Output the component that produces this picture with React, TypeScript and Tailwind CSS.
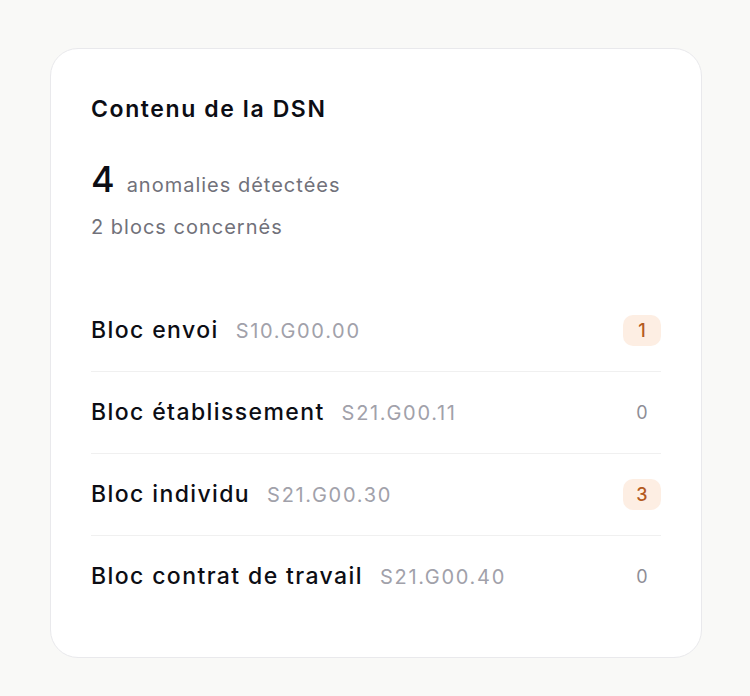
import React from 'react';

type Bloc = {
  name: string;
  code: string;
  count: number;
};

const blocs: Bloc[] = [
  { name: 'Bloc envoi', code: 'S10.G00.00', count: 1 },
  { name: 'Bloc établissement', code: 'S21.G00.11', count: 0 },
  { name: 'Bloc individu', code: 'S21.G00.30', count: 3 },
  { name: 'Bloc contrat de travail', code: 'S21.G00.40', count: 0 },
];

export default function App() {
  return (
    <main
      className="min-h-[696px] w-full bg-[#f9f9f7] pl-[50px] pr-[48px] pt-[48px] pb-[39px]"
      style={{ fontFamily: 'Inter, "Noto Sans", sans-serif' }}
    >
      <section className="rounded-[28px] border border-[#e9e9ec] bg-white px-10 pt-[46px] pb-[40px]">
        <h2 className="text-[23px] leading-[28px] font-semibold tracking-[1.6px] text-[#0c0d14]">Contenu de la DSN</h2>

        <div className="mt-[42px] flex items-baseline gap-[12px]">
          <span className="text-[36px] leading-[28px] font-medium text-[#0c0d14]">4</span>
          <span className="text-[20px] leading-[28px] tracking-[1px] text-[#71717a]">anomalies détectées</span>
        </div>
        <p className="mt-[14px] text-[20px] leading-[28px] tracking-[1px] text-[#71717a]">2 blocs concernés</p>

        <ul className="mt-[49px]">
          {blocs.map((bloc, index) => (
            <li
              key={bloc.code}
              className={
                index < blocs.length - 1
                  ? 'flex h-[82px] items-center justify-between border-b border-[#f0f0f0]'
                  : 'flex h-[81px] items-center justify-between'
              }
            >
              <div className="flex items-baseline gap-[17px]">
                <span className="text-[23px] font-medium tracking-[1.4px] text-[#0c0d14]">{bloc.name}</span>
                <span className="text-[20px] tracking-[1.7px] text-[#a1a1aa]">{bloc.code}</span>
              </div>
              {bloc.count > 0 ? (
                <span className="flex h-[31px] w-[38px] items-center justify-center rounded-[10px] bg-[#fdeee3] text-[18px] font-medium text-[#b45a20]">
                  {bloc.count}
                </span>
              ) : (
                <span className="flex h-[31px] w-[38px] items-center justify-center text-[18px] text-[#8e8e96]">
                  {bloc.count}
                </span>
              )}
            </li>
          ))}
        </ul>
      </section>
    </main>
  );
}
